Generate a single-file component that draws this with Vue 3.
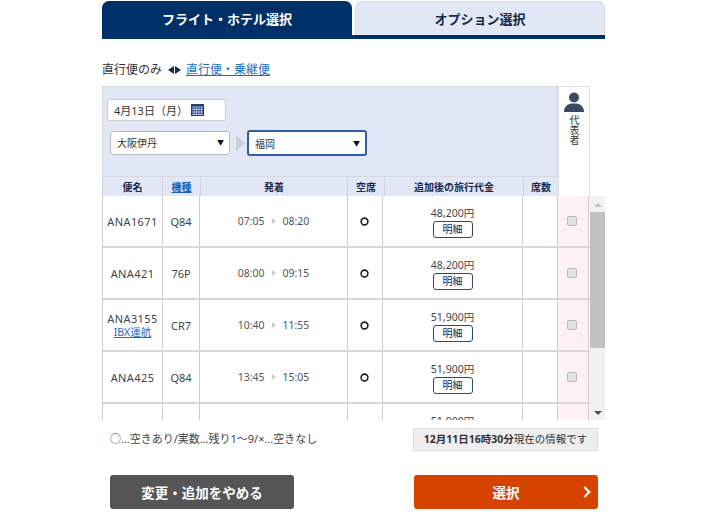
<script setup>
const flights = [
  { name: "ANA1671", type: "Q84", dep: "07:05", arr: "08:20", price: "48,200円" },
  { name: "ANA421", type: "76P", dep: "08:00", arr: "09:15", price: "48,200円" },
  { name: "ANA3155", sub: "IBX運航", type: "CR7", dep: "10:40", arr: "11:55", price: "51,900円" },
  { name: "ANA425", type: "Q84", dep: "13:45", arr: "15:05", price: "51,900円" }
]
</script>

<template>
  <div class="page">
    <div class="tabs">
      <div class="tab active">フライト・ホテル選択</div>
      <div class="tab">オプション選択</div>
    </div>

    <div class="route-switch">
      <span>直行便のみ</span>
      <svg class="arrows" width="13" height="8" viewBox="0 0 13 8">
        <path d="M6 0v8L0 4zM7 0v8l6-4z" fill="#16294a" />
      </svg>
      <a href="#">直行便・乗継便</a>
    </div>

    <div class="search">
      <div class="search-left">
        <div class="panel">
          <div class="date">
            <span>4月13日（月）</span>
            <svg class="cal" width="13" height="12" viewBox="0 0 13 12">
              <rect width="13" height="12" fill="#1f3f7f" />
              <path d="M1 3h11M1 5.500h11M1 8h11M1 10.500h11M3 3v8M5.500 3v8M8 3v8M10.500 3v8" stroke="#c5d0ea" stroke-width="0.8" />
            </svg>
          </div>
          <div class="airports">
            <div class="select">大阪伊丹<span class="caret">▼</span></div>
            <span class="between"></span>
            <div class="select focus">福岡<span class="caret">▼</span></div>
          </div>
        </div>
        <div class="head">
          <div>便名</div>
          <div><a href="#">機種</a></div>
          <div>発着</div>
          <div>空席</div>
          <div>追加後の旅行代金</div>
          <div>席数</div>
        </div>
      </div>
      <div class="rep">
        <svg width="20" height="20" viewBox="0 0 20 20">
          <circle cx="10" cy="5.500" r="5" fill="#3c4a60" />
          <path d="M0 20c0-5 3-7.500 7-8.500h6c4 1 7 3.500 7 8.500z" fill="#3c4a60" />
        </svg>
        <span class="rep-label">代表者</span>
      </div>
    </div>

    <div class="list-wrap">
      <div class="list">
        <div v-for="f in flights" :key="f.name" class="row">
          <div class="name">
            <span>{{ f.name }}</span>
            <a v-if="f.sub" href="#">{{ f.sub }}</a>
          </div>
          <div>{{ f.type }}</div>
          <div class="time">
            <span>{{ f.dep }}</span>
            <span class="tri"></span>
            <span>{{ f.arr }}</span>
          </div>
          <div class="seat">
            <svg width="9" height="9" viewBox="0 0 9 9">
              <circle cx="4.500" cy="4.500" r="3.400" fill="none" stroke="#222" stroke-width="1.600" />
            </svg>
          </div>
          <div class="price">
            <span>{{ f.price }}</span>
            <span class="detail">明細</span>
          </div>
          <div></div>
          <div class="check"><input type="checkbox" disabled /></div>
        </div>
        <!-- 5行目は価格の上端だけ見えている -->
        <div class="row">
          <div></div>
          <div></div>
          <div></div>
          <div></div>
          <div class="price-top">51,900円</div>
          <div></div>
          <div class="check"></div>
        </div>
      </div>
      <div class="scrollbar">
        <span class="sb-btn"><i class="up"></i></span>
        <span class="sb-thumb"></span>
        <span class="sb-btn"><i class="down"></i></span>
      </div>
    </div>

    <div class="info">
      <span class="legend">○…空きあり/実数…残り1～9/×…空きなし</span>
      <span class="stamp"><b>12月11日16時30分</b>現在の情報です</span>
    </div>

    <div class="actions">
      <button class="btn cancel">変更・追加をやめる</button>
      <button class="btn next">選択<span class="chev"></span></button>
    </div>
  </div>
</template>

<style>
html,
body {
  background: #fff;
}
</style>

<style scoped>
.page {
  width: 503px;
  margin-left: 102px;
  padding-top: 1px;
  font-family: "Noto Sans", "Noto Sans CJK JP", sans-serif;
  font-size: 11px;
  color: #444;
}
a {
  color: #1a6fc9;
}
.tabs {
  display: flex;
  justify-content: space-between;
  height: 34px;
  border-bottom: 4px solid #003068;
}
.tab {
  width: 250px;
  display: flex;
  align-items: center;
  justify-content: center;
  box-sizing: border-box;
  height: 34px;
  background: #e1e7f5;
  border: 1px solid #d5d9e2;
  border-bottom: none;
  border-radius: 7px 7px 0 0;
  font-size: 13px;
  font-weight: 700;
  color: #16294a;
}
.tab.active {
  background: #003068;
  border-color: #003068;
  color: #fff;
}
.route-switch {
  display: flex;
  align-items: center;
  height: 20px;
  margin-top: 20px;
  margin-bottom: 7px;
  font-size: 12px;
  color: #333;
}
.arrows {
  margin: 1px 5px 0 6px;
}
.search {
  display: flex;
  align-items: stretch;
}
.search-left {
  width: 456px;
}
.panel {
  height: 90px;
  box-sizing: border-box;
  padding: 12px 4px 0;
  background: #e1e7f6;
  border: 1px solid #d5d9e2;
  border-bottom: none;
}
.date {
  display: flex;
  align-items: center;
  box-sizing: border-box;
  width: 119px;
  height: 22px;
  padding-left: 6px;
  background: #fff;
  border: 1px solid #ccc;
  border-radius: 2px;
  color: #333;
}
.cal {
  margin-left: 3px;
}
.airports {
  display: flex;
  align-items: center;
  margin-top: 9px;
  margin-left: 3px;
}
.select {
  position: relative;
  box-sizing: border-box;
  width: 120px;
  height: 24px;
  line-height: 22px;
  padding-left: 6px;
  background: #fff;
  border: 1px solid #bbb;
  border-radius: 3px;
  font-size: 10px;
  color: #333;
}
.select.focus {
  height: 26px;
  line-height: 24px;
  border: 2px solid #2e5fa8;
}
.caret {
  position: absolute;
  right: 5px;
  top: 0;
  font-size: 7px;
  color: #111;
}
.between {
  width: 0;
  height: 0;
  margin: 0 2px 0 6px;
  border-left: 9px solid #ccd0d8;
  border-top: 8px solid transparent;
  border-bottom: 8px solid transparent;
}
.head {
  display: grid;
  grid-template-columns: 60px 38px 147px 37px 139px 35px;
  height: 20px;
  background: #e1e7f6;
  border-top: 1px solid #d5d9e2;
  box-sizing: border-box;
  font-weight: 700;
  font-size: 10px;
  color: #16294a;
}
.head > div {
  display: flex;
  align-items: center;
  justify-content: center;
  border-left: 1px solid #d0d4dc;
}
.head a {
  color: #1a5fb4;
}
.rep {
  display: flex;
  flex-direction: column;
  align-items: center;
  box-sizing: border-box;
  width: 32px;
  padding-top: 5px;
  border: 1px solid #ddd;
  border-bottom: none;
}
.rep-label {
  writing-mode: vertical-rl;
  margin-top: 3px;
  font-size: 10px;
  line-height: 12px;
  color: #333;
}
.list-wrap {
  display: flex;
  height: 224px;
}
.list {
  width: 488px;
  overflow: hidden;
}
.scrollbar {
  display: flex;
  flex-direction: column;
  justify-content: space-between;
  box-sizing: border-box;
  width: 15px;
  padding-top: 1px;
  background: #f1f1f1;
}
.sb-btn {
  display: flex;
  align-items: center;
  justify-content: center;
  height: 15px;
}
.sb-thumb {
  height: 136px;
  margin-bottom: auto;
  background: #c1c1c1;
}
.sb-btn i {
  width: 0;
  height: 0;
  border-left: 4px solid transparent;
  border-right: 4px solid transparent;
}
.sb-btn .up {
  border-bottom: 4px solid #c4c4c4;
}
.sb-btn .down {
  border-top: 4px solid #505050;
}
.row {
  display: grid;
  grid-template-columns: 60px 37px 148px 35px 140px 35px 32px;
  height: 52px;
  box-sizing: border-box;
  border-bottom: 2px solid #d8d8d8;
}
.row > div {
  display: flex;
  align-items: center;
  justify-content: center;
  border-left: 1px solid #ccc;
}
.name {
  flex-direction: column;
  line-height: 13px;
  letter-spacing: 0.4px;
}
.name a {
  display: block;
  margin-top: 1px;
  letter-spacing: 0;
  font-size: 10.500px;
}
.time {
  gap: 7px;
  font-size: 10.500px;
  color: #555;
}
.tri {
  width: 0;
  height: 0;
  border-left: 4px solid #ccc;
  border-top: 3px solid transparent;
  border-bottom: 3px solid transparent;
}
.row > .seat {
  padding-right: 2px;
}
.row > .price {
  flex-direction: column;
  padding-top: 2px;
  line-height: 13px;
  font-size: 10.500px;
}
.row > .price-top {
  align-items: flex-start;
  padding-top: 11px;
  font-size: 10.500px;
  line-height: 13px;
}
.detail {
  box-sizing: border-box;
  width: 40px;
  height: 17px;
  margin-top: 1px;
  line-height: 14px;
  text-align: center;
  border: 1.500px solid #2b4a78;
  border-radius: 3px;
  font-size: 10px;
  color: #16294a;
}
.row > .check {
  background: #fdf1f1;
  border-right: 1px solid #ccc;
}
.check input {
  appearance: none;
  box-sizing: border-box;
  width: 10px;
  height: 10px;
  margin: 0 2px 0 0;
  background: #e2e2e2;
  border: 1px solid #b8b8b8;
  border-radius: 2px;
}
.info {
  display: flex;
  align-items: center;
  justify-content: space-between;
  margin-top: 8px;
  padding: 0 7px 0 8px;
}
.legend {
  font-size: 11px;
  line-height: 16px;
  margin-bottom: 2px;
  color: #444;
}
.stamp {
  box-sizing: border-box;
  width: 185px;
  height: 23px;
  line-height: 21px;
  text-align: center;
  background: #eee;
  border: 1px solid #ddd;
  font-size: 10.500px;
  color: #333;
}
.actions {
  display: flex;
  justify-content: space-between;
  margin-top: 24px;
  padding: 0 7px 0 8px;
}
.btn {
  position: relative;
  width: 184px;
  height: 34px;
  border: none;
  border-radius: 3px;
  font-family: inherit;
  font-size: 13.500px;
  font-weight: 700;
  color: #fff;
}
.cancel {
  background: #555;
}
.next {
  background: #d64200;
}
.chev {
  position: absolute;
  right: 9px;
  top: 13px;
  width: 6px;
  height: 6px;
  border-top: 2px solid #fff;
  border-right: 2px solid #fff;
  transform: rotate(45deg);
}
</style>
